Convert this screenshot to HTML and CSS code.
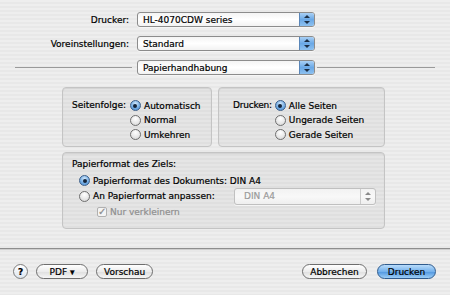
FILE: index.html
```html
<!DOCTYPE html>
<html lang="de">
<head>
    <meta charset="UTF-8">
    <title>Drucken</title>
    <link rel="stylesheet" href="styles.css">
</head>
<body>
    <div class="dialog">

        <!-- Printer / presets -->
        <div class="form-row">
            <span class="form-label">Drucker:</span>
            <div class="popup"><span>HL-4070CDW series</span><span class="stepper"></span></div>
        </div>
        <div class="form-row">
            <span class="form-label">Voreinstellungen:</span>
            <div class="popup"><span>Standard</span><span class="stepper"></span></div>
        </div>

        <!-- Pane selector -->
        <div class="pane-row">
            <div class="pane-line left"></div>
            <div class="popup"><span>Papierhandhabung</span><span class="stepper"></span></div>
            <div class="pane-line right"></div>
        </div>

        <div class="panels">
            <div class="panel-row">
                <div class="box box-order">
                    <span class="box-label">Seitenfolge:</span>
                    <div class="radio-list">
                        <label class="radio on"><span class="dot"></span>Automatisch</label>
                        <label class="radio"><span class="dot"></span>Normal</label>
                        <label class="radio"><span class="dot"></span>Umkehren</label>
                    </div>
                </div>
                <div class="box box-pages">
                    <span class="box-label">Drucken:</span>
                    <div class="radio-list">
                        <label class="radio on"><span class="dot"></span>Alle Seiten</label>
                        <label class="radio"><span class="dot"></span>Ungerade Seiten</label>
                        <label class="radio"><span class="dot"></span>Gerade Seiten</label>
                    </div>
                </div>
            </div>

            <div class="box box-paper">
                <div class="box-title">Papierformat des Ziels:</div>
                <label class="radio on"><span class="dot"></span>Papierformat des Dokuments: DIN A4</label>
                <div class="fit-row">
                    <label class="radio"><span class="dot"></span>An Papierformat anpassen:</label>
                    <div class="popup disabled"><span>DIN A4</span><span class="stepper"></span></div>
                </div>
                <label class="check disabled"><span class="box-check">&#10003;</span>Nur verkleinern</label>
            </div>
        </div>

        <div class="divider"></div>

        <!-- Buttons -->
        <div class="button-bar">
            <div class="left-buttons">
                <span class="help">?</span>
                <span class="btn btn-pdf">PDF &#9662;</span>
                <span class="btn">Vorschau</span>
            </div>
            <div class="right-buttons">
                <span class="btn">Abbrechen</span>
                <span class="btn default">Drucken</span>
            </div>
        </div>
    </div>
</body>
</html>
```

FILE: styles.css
```css
* {
    margin: 0;
    padding: 0;
    box-sizing: border-box;
}

body {
    font-family: 'DejaVu Sans', sans-serif;
    font-size: 9px;
    color: #000;
    -webkit-text-stroke: 0.2px;
    width: 450px;
    height: 295px;
    overflow: hidden;
    background: repeating-linear-gradient(#eeeeee 0 2px, #e8e8e8 2px 4px);
}

.dialog {
    padding-top: 12px;
}

/* top form */
.form-row {
    display: flex;
    align-items: center;
    height: 15px;
    margin-bottom: 9px;
}

.form-label {
    width: 129px;
    text-align: right;
    margin-right: 8px;
}

.popup {
    position: relative;
    width: 178px;
    height: 15px;
    display: flex;
    align-items: center;
    padding-left: 5px;
    border: 1px solid #8c8c8c;
    border-radius: 3px;
    background: linear-gradient(#f4f4f4, #ffffff 50%, #f2f2f2);
    box-shadow: 0 1px 0 rgba(255, 255, 255, 0.6);
}

.popup span:first-child {
    flex: 1;
}

.stepper {
    width: 15px;
    height: 13px;
    border-left: 1px solid #5a86b8;
    border-radius: 0 2px 2px 0;
    background: linear-gradient(#a9d0f5, #6aa8e6 50%, #8ec1f0);
    position: relative;
}

.stepper::before,
.stepper::after {
    content: '';
    position: absolute;
    left: 4px;
    border-left: 3px solid transparent;
    border-right: 3px solid transparent;
}

.stepper::before {
    top: 2px;
    border-bottom: 3px solid #1d2f45;
}

.stepper::after {
    bottom: 2px;
    border-top: 3px solid #1d2f45;
}

/* pane selector */
.pane-row {
    display: flex;
    align-items: center;
    height: 15px;
    margin-top: 1px;
}

.pane-line {
    height: 1px;
    background: #9a9a9a;
}

.pane-line.left {
    width: 117px;
    margin-left: 15px;
    margin-right: 5px;
}

.pane-line.right {
    width: 118px;
    margin-left: 2px;
}

/* group boxes */
.panels {
    margin-top: 12px;
    padding-left: 62px;
}

.panel-row {
    display: flex;
    gap: 6px;
    margin-bottom: 5px;
}

.box {
    background: rgba(0, 0, 0, 0.035);
    border: 1px solid #c4c4c4;
    border-radius: 4px;
    box-shadow: inset 0 1px 1px rgba(0, 0, 0, 0.08);
}

.box-order,
.box-pages {
    height: 60px;
    display: flex;
    padding-top: 11px;
}

.box-order {
    width: 150px;
    padding-left: 9px;
}

.box-pages {
    width: 167px;
    padding-left: 14px;
}

.box-label {
    line-height: 13px;
    margin-right: 4px;
}

.box-pages .box-label {
    letter-spacing: -0.2px;
    margin-right: 3px;
}

.radio-list {
    display: flex;
    flex-direction: column;
    gap: 1.5px;
}

.radio {
    display: flex;
    align-items: center;
    height: 13px;
}

.dot {
    width: 11px;
    height: 11px;
    margin-right: 3px;
    border-radius: 50%;
    border: 1px solid #6f6f6f;
    background: radial-gradient(circle at 50% 30%, #ffffff, #e6e6e6 60%, #cfcfcf);
    position: relative;
}

.radio.on .dot {
    border-color: #3c5f8a;
    background: radial-gradient(circle at 50% 30%, #cfe6fb, #6fa9e2 60%, #4f8dd0);
}

.radio.on .dot::after {
    content: '';
    position: absolute;
    left: 2.5px;
    top: 2.5px;
    width: 4px;
    height: 4px;
    border-radius: 50%;
    background: #14243a;
}

.box-paper {
    width: 323px;
    height: 77px;
    padding: 5px 0 0 9px;
}

.box-title {
    line-height: 13px;
    margin-bottom: 3px;
}

.box-paper > .radio {
    margin-left: 7px;
}

.fit-row {
    display: flex;
    align-items: center;
    height: 18px;
    margin-left: 7px;
}

.fit-row .radio {
    width: 155px;
}

.popup.disabled {
    width: 142px;
    height: 17px;
    color: #9a9a9a;
    border-color: #c0c0c0;
    background: linear-gradient(#f2f2f2, #f8f8f8 50%, #efefef);
    padding-left: 9px;
}

.popup.disabled .stepper {
    height: 15px;
    border-left: 1px solid #cccccc;
    background: none;
}

.popup.disabled .stepper::before {
    border-bottom-color: #8a8a8a;
    top: 3px;
}

.popup.disabled .stepper::after {
    border-top-color: #8a8a8a;
    bottom: 3px;
}

.check {
    display: flex;
    align-items: center;
    height: 13px;
    margin-left: 25px;
}

.check.disabled {
    color: #8e8e8e;
}

.box-check {
    width: 10px;
    height: 10px;
    margin-right: 3px;
    border: 1px solid #b0b0b0;
    border-radius: 2px;
    background: #f4f4f4;
    font-size: 10px;
    line-height: 8px;
    color: #8a8a8a;
    text-align: center;
}

/* bottom bar */
.divider {
    margin-top: 19px;
    height: 2px;
    border-top: 1px solid #8e8e8e;
    border-bottom: 1px solid #cfcfcf;
}

.button-bar {
    display: flex;
    justify-content: space-between;
    margin-top: 14px;
    padding: 0 14px 0 13px;
}

.left-buttons,
.right-buttons {
    display: flex;
    align-items: center;
}

.help {
    width: 15px;
    height: 15px;
    border-radius: 50%;
    border: 1px solid #7c7c7c;
    background: linear-gradient(#ffffff, #dde6ef);
    display: flex;
    align-items: center;
    justify-content: center;
    font-weight: bold;
    font-size: 9px;
    margin-right: 8px;
}

.btn {
    height: 15px;
    display: flex;
    align-items: center;
    justify-content: center;
    padding: 0 7px;
    border: 1px solid #6e6e6e;
    border-radius: 8px;
    background: linear-gradient(#ffffff, #ececec 50%, #dedede 51%, #f6f6f6);
    margin-right: 8px;
}

.btn-pdf {
    width: 52px;
}

.right-buttons .btn {
    margin-right: 0;
    margin-left: 10px;
}

.right-buttons .btn:first-child {
    width: 65px;
}

.btn.default {
    width: 59px;
    border-color: #2f5b8d;
    background: linear-gradient(#b9dcfb, #74b1ec 50%, #4e95df 51%, #9ccdf6);
}
```
